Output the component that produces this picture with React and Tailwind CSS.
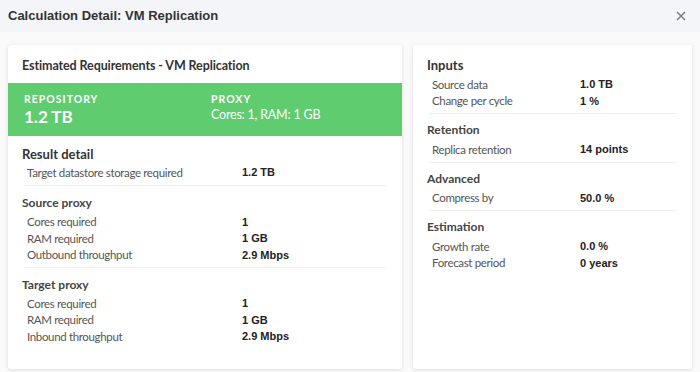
import React from "react";

const labelFont = { fontFamily: '"Lato", "Noto Sans", sans-serif' };

const Row = ({ label, value, w = "w-[215px]" }) => (
  <div className="flex items-center h-[16.5px]">
    <span className={`${w} text-[11.5px] tracking-[-0.35px] text-[#555]`} style={labelFont}>
      {label}
    </span>
    <span className="text-[11px] font-bold text-[#222] font-['Liberation_Sans',Arial,sans-serif]">
      {value}
    </span>
  </div>
);

const RightRow = ({ label, value }) => (
  <div className="flex items-center h-[16.5px]">
    <span className="w-[148px] text-[11.5px] tracking-[-0.35px] text-[#555]" style={labelFont}>
      {label}
    </span>
    <span className="text-[11px] font-bold text-[#222] font-['Liberation_Sans',Arial,sans-serif]">
      {value}
    </span>
  </div>
);

const Divider = () => <div className="border-t border-[#eee] mt-[4px] mx-[2px]" />;

const App = () => {
  return (
    <div className="w-[700px] h-[372px] bg-[#fafafa] overflow-hidden">
      {/* header */}
      <div className="h-[32px] bg-[#f4f5f9] flex items-center justify-between pl-[8px] pr-[14px]">
        <h1 className="text-[13px] font-bold text-[#333] font-['Liberation_Sans',Arial,sans-serif]">
          Calculation Detail: VM Replication
        </h1>
        <svg width="10" height="10" viewBox="0 0 10 10" className="text-[#777]">
          <path d="M1 1L9 9M9 1L1 9" stroke="currentColor" strokeWidth="1.4" />
        </svg>
      </div>

      <div className="flex gap-[11px] px-[8px] pt-[13px]">
        {/* left card */}
        <div className="w-[394px] h-[324px] bg-white rounded-[3px] shadow-[0_1px_4px_rgba(0,0,0,0.12)]" style={labelFont}>
          <div className="h-[38px] flex items-center px-[14px] pt-[4px]">
            <h2 className="text-[12.5px] font-bold text-[#333] tracking-[-0.1px]">
              Estimated Requirements - VM Replication
            </h2>
          </div>
          <div className="h-[53px] bg-[#5fcc6f] text-white flex items-center px-[16px] pt-[1px]">
            <div className="w-[187px]">
              <div className="text-[10.5px] font-bold tracking-[1px] leading-[13px]">REPOSITORY</div>
              <div className="text-[17px] font-bold leading-[22px]">1.2 TB</div>
            </div>
            <div className="mt-[-4px]">
              <div className="text-[10.5px] font-bold tracking-[1px] leading-[13px]">PROXY</div>
              <div className="text-[12.5px] leading-[18px] tracking-[-0.2px]">Cores: 1, RAM: 1 GB</div>
            </div>
          </div>
          <div className="px-[14px] pt-[9px]">
            <h3 className="text-[13px] font-bold text-[#333] leading-[18px]">Result detail</h3>
            <div className="pl-[5px] mt-[1px]">
              <Row label="Target datastore storage required" value="1.2 TB" />
            </div>
            <Divider />
            <h4 className="text-[12px] font-bold text-[#444] mt-[9px] leading-[16px]">Source proxy</h4>
            <div className="pl-[5px] mt-[3px]">
              <Row label="Cores required" value="1" />
              <Row label="RAM required" value="1 GB" />
              <Row label="Outbound throughput" value="2.9 Mbps" />
            </div>
            <Divider />
            <h4 className="text-[12px] font-bold text-[#444] mt-[9px] leading-[16px]">Target proxy</h4>
            <div className="pl-[5px] mt-[2px]">
              <Row label="Cores required" value="1" />
              <Row label="RAM required" value="1 GB" />
              <Row label="Inbound throughput" value="2.9 Mbps" />
            </div>
          </div>
        </div>

        {/* right card */}
        <div className="w-[279px] h-[324px] bg-white rounded-[3px] shadow-[0_1px_4px_rgba(0,0,0,0.12)] px-[14px] pt-[11px]" style={labelFont}>
          <h3 className="text-[13px] font-bold text-[#333] leading-[18px]">Inputs</h3>
          <div className="pl-[5px] mt-[2px]">
            <RightRow label="Source data" value="1.0 TB" />
            <RightRow label="Change per cycle" value="1 %" />
          </div>
          <Divider />
          <h4 className="text-[12px] font-bold text-[#444] mt-[8px] leading-[16px]">Retention</h4>
          <div className="pl-[5px] mt-[3px]">
            <RightRow label="Replica retention" value="14 points" />
          </div>
          <Divider />
          <h4 className="text-[12px] font-bold text-[#444] mt-[8px] leading-[16px]">Advanced</h4>
          <div className="pl-[5px] mt-[3px]">
            <RightRow label="Compress by" value="50.0 %" />
          </div>
          <Divider />
          <h4 className="text-[12px] font-bold text-[#444] mt-[8px] leading-[16px]">Estimation</h4>
          <div className="pl-[5px] mt-[3px]">
            <RightRow label="Growth rate" value="0.0 %" />
            <RightRow label="Forecast period" value="0 years" />
          </div>
        </div>
      </div>
    </div>
  );
};

export default App;
